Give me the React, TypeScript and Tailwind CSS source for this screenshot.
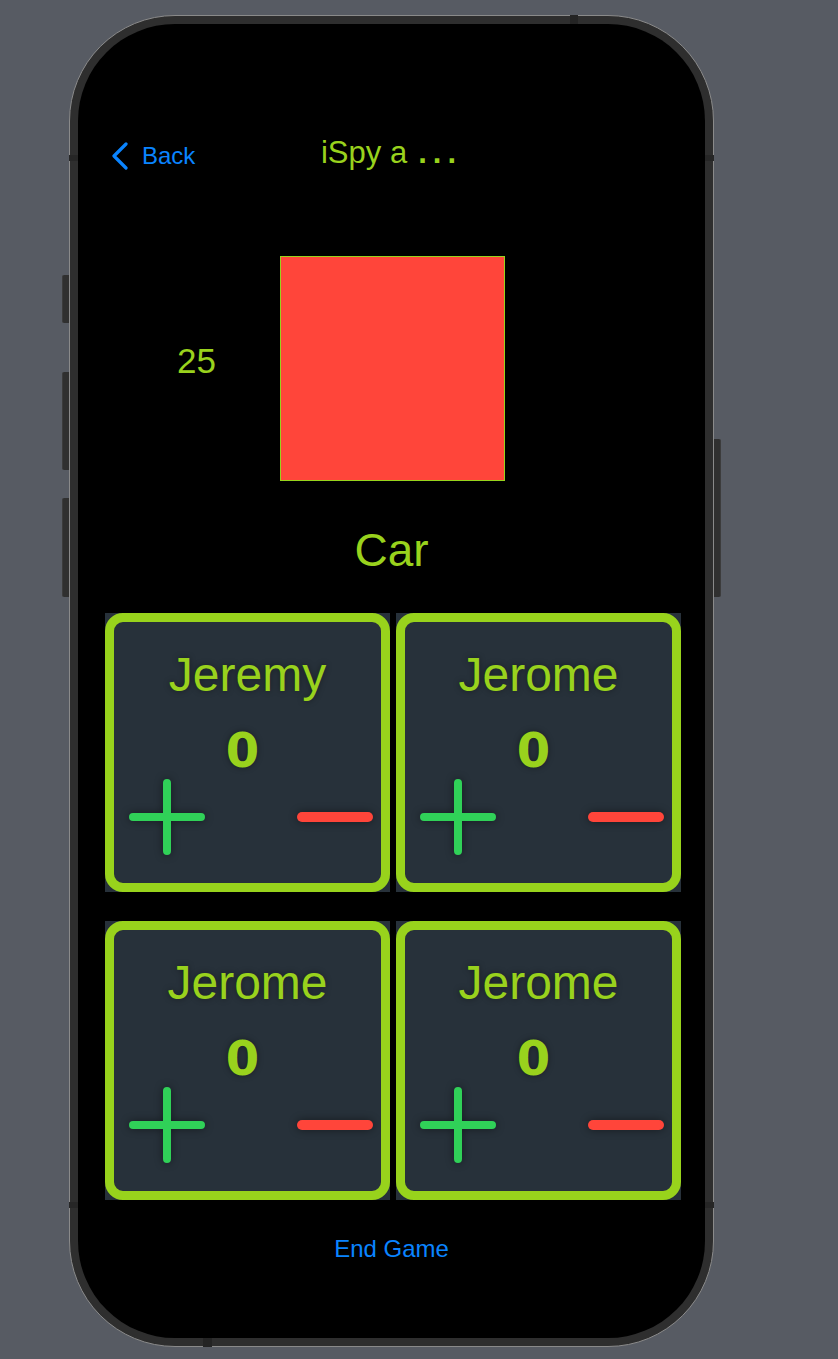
import React from "react";

function Plus() {
  return (
    <svg width="76" height="76" viewBox="0 0 76 76" className="[filter:drop-shadow(0_0_4px_rgba(0,0,0,0.45))]">
      <path d="M38 4V72M4 38H72" stroke="#30d158" strokeWidth="8" strokeLinecap="round" fill="none" />
    </svg>
  );
}

function Minus() {
  return (
    <svg width="76" height="12" viewBox="0 0 76 12" className="[filter:drop-shadow(0_0_4px_rgba(0,0,0,0.45))]">
      <path d="M5 6H71" stroke="#ff453a" strokeWidth="10" strokeLinecap="round" fill="none" />
    </svg>
  );
}

function Tile({ name }: { name: string }) {
  return (
    <div className="w-[285px] h-[279px] bg-[#27313a]">
      <div className="h-full rounded-[18px] border-[9px] border-[#98d31c] flex flex-col items-center">
        <div className="mt-[28.5px] text-[48px] leading-none text-[#99d21d] [text-shadow:0_0_6px_rgba(0,0,0,0.4)]">
          {name}
        </div>
        <div
          className="mt-[27.5px] text-[48px] leading-none font-bold text-[#99d21d] -translate-x-[5px] [text-shadow:0_0_6px_rgba(0,0,0,0.4)]"
          style={{ fontFamily: '"DejaVu Sans", sans-serif' }}
        >
          0
        </div>
        <div className="mt-[5px] w-full h-[76px] flex items-center justify-between pl-[15px] pr-[8px]">
          <Plus />
          <Minus />
        </div>
      </div>
    </div>
  );
}

function Screen() {
  return (
    <div className="w-[627px] h-[1314px] rounded-[97px] bg-black overflow-hidden flex flex-col">
      {/* nav bar */}
      <div className="mt-[113px] grid grid-cols-[1fr_auto_1fr] items-start h-[31px]">
        <div className="flex items-center h-[28px] mt-[5px] pl-[33px] gap-[13px]">
          <svg width="18" height="28" viewBox="0 0 18 28">
            <path d="M15 2L3 14L15 26" stroke="#0a84ff" strokeWidth="3.2" fill="none" strokeLinecap="round" strokeLinejoin="round" />
          </svg>
          <span className="text-[24px] leading-none text-[#0a84ff]">Back</span>
        </div>
        <div className="text-[31px] leading-none text-[#99d21d] whitespace-nowrap">
          iSpy a<span className="ml-[11px] tracking-[6px] font-bold">...</span>
        </div>
        <div />
      </div>

      {/* timer + colour */}
      <div className="mt-[88px] pl-[2px] grid grid-cols-[1fr_auto_1fr]">
        <div className="pl-[97px] pt-[87px] text-[35px] leading-none text-[#99d21d]">25</div>
        <div className="w-[225px] h-[225px] bg-[#ff453a] border border-[#98d31c]" />
        <div />
      </div>

      {/* word */}
      <div className="mt-[46px] text-center text-[46px] leading-none text-[#99d21d]">Car</div>

      {/* players */}
      <div className="mt-[40px] pl-[27px] grid grid-cols-[285px_285px] gap-x-[6px] gap-y-[29px]">
        <Tile name="Jeremy" />
        <Tile name="Jerome" />
        <Tile name="Jerome" />
        <Tile name="Jerome" />
      </div>

      <div className="mt-[37px] text-center text-[24px] leading-none text-[#0a84ff]">End Game</div>
    </div>
  );
}

export default function App() {
  return (
    <div
      className="w-[838px] h-[1359px] bg-[#575b63] pt-[15px] pl-[69px] overflow-hidden"
      style={{ fontFamily: '"Liberation Sans", Arial, sans-serif' }}
    >
      <div className="relative w-[645px] h-[1332px] rounded-[106px] bg-[#2e2e2e] border border-[#8a8a8a] p-[8px]">
        {/* side buttons */}
        <div className="absolute left-[-8px] top-[259px] w-[7px] h-[48px] bg-[#303030] border-l border-[#3c3c3c] rounded-l-[2px]" />
        <div className="absolute left-[-8px] top-[356px] w-[7px] h-[98px] bg-[#303030] border-l border-[#3c3c3c] rounded-l-[2px]" />
        <div className="absolute left-[-8px] top-[482px] w-[7px] h-[99px] bg-[#303030] border-l border-[#3c3c3c] rounded-l-[2px]" />
        <div className="absolute left-[644px] top-[423px] w-[7px] h-[158px] bg-[#303030] border-r border-[#3c3c3c] rounded-r-[2px]" />
        {/* antenna bands */}
        <div className="absolute left-[500px] top-[-1px] w-[8px] h-[9px] bg-[#242424]" />
        <div className="absolute left-[133px] top-[1322px] w-[9px] h-[9px] bg-[#242424]" />
        <div className="absolute left-[-1px] top-[139px] w-[9px] h-[6px] bg-[#262626]" />
        <div className="absolute left-[635px] top-[139px] w-[9px] h-[6px] bg-[#262626]" />
        <div className="absolute left-[-1px] top-[1186px] w-[9px] h-[6px] bg-[#262626]" />
        <div className="absolute left-[635px] top-[1186px] w-[9px] h-[6px] bg-[#262626]" />
        <Screen />
      </div>
    </div>
  );
}
